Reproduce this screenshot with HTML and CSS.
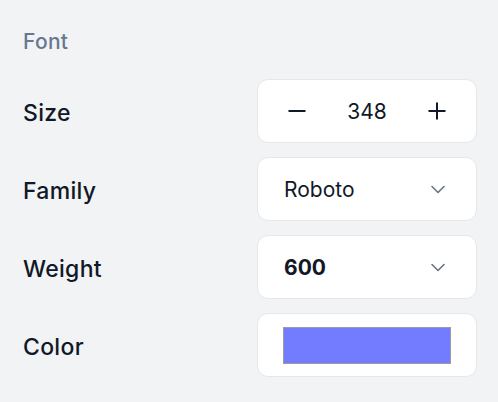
FILE: index.html
```html
<!DOCTYPE html>
<html>
<head>
<meta charset="utf-8">
<link rel="stylesheet" href="styles.css">
</head>
<body>
<div class="panel">
  <div class="section-title">Font</div>
  <div class="rows">
    <div class="row">
      <span class="label">Size</span>
      <div class="control stepper">
        <svg class="step-icon" width="18" height="18" viewBox="0 0 18 18"><path d="M0.5 9H17.5" /></svg>
        <span class="value">348</span>
        <svg class="step-icon" width="18" height="18" viewBox="0 0 18 18"><path d="M0.5 9H17.5M9 0.5V17.5" /></svg>
      </div>
    </div>
    <div class="row">
      <span class="label">Family</span>
      <div class="control select">
        <span class="value">Roboto</span>
        <svg class="chevron" width="16" height="16" viewBox="0 0 16 16"><path d="M2 5.5L8 11.5L14 5.5" /></svg>
      </div>
    </div>
    <div class="row">
      <span class="label">Weight</span>
      <div class="control select">
        <span class="value bold">600</span>
        <svg class="chevron" width="16" height="16" viewBox="0 0 16 16"><path d="M2 5.5L8 11.5L14 5.5" /></svg>
      </div>
    </div>
    <div class="row">
      <span class="label">Color</span>
      <div class="control color">
        <span class="swatch"></span>
      </div>
    </div>
  </div>
</div>
</body>
</html>
```

FILE: styles.css
```css
* { box-sizing: border-box; }

body {
  margin: 0;
  background: #f2f3f5;
  font-family: Inter, "Liberation Sans", sans-serif;
}

.panel {
  padding: 28px 21px 0 23px;
}

.section-title {
  font-size: 21px;
  line-height: 28px;
  font-weight: 500;
  letter-spacing: 0.3px;
  color: #677790;
  margin-bottom: 23px;
}

.rows {
  display: grid;
  gap: 14px;
}

.row {
  display: flex;
  align-items: center;
  justify-content: space-between;
}

.label {
  font-size: 23px;
  font-weight: 500;
  letter-spacing: 0.3px;
  color: #111827;
  padding-top: 3px;
}

.control {
  width: 220px;
  height: 64px;
  background: #ffffff;
  border: 1px solid #e5e7eb;
  border-radius: 11px;
}

.stepper {
  display: grid;
  grid-template-columns: repeat(3, 1fr);
  align-items: center;
  justify-items: center;
  padding: 0 4px;
}

.step-icon path {
  stroke: #111827;
  stroke-width: 2;
  fill: none;
}

.value {
  font-size: 21px;
  color: #111827;
}

.value.bold {
  font-weight: 700;
}

.select {
  display: flex;
  align-items: center;
  justify-content: space-between;
  padding: 0 30px 0 26px;
}

.chevron path {
  stroke: #6b7280;
  stroke-width: 1.6;
  fill: none;
  stroke-linecap: round;
  stroke-linejoin: round;
}

.color {
  display: flex;
  align-items: center;
  justify-content: center;
}

.swatch {
  width: 168px;
  height: 37px;
  background: #737cff;
  border: 1px solid #9c9c9c;
}
```
